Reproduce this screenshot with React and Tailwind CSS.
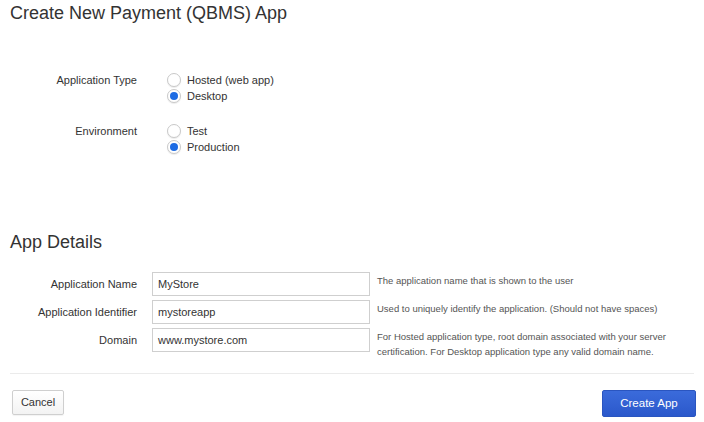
import React from "react";

function Radio({ checked, label }) {
  return (
    <div className="flex items-center h-[16px]">
      <span className="w-[14px] h-[14px] rounded-full bg-white border border-[#c9c9c9] shadow-[0_1px_1px_rgba(0,0,0,0.08)] flex items-center justify-center">
        {checked && <span className="w-[8px] h-[8px] rounded-full bg-[#1d6be3]" />}
      </span>
      <span className="ml-[6px] text-[11px] leading-[16px] text-[#333]">{label}</span>
    </div>
  );
}

function RadioGroup({ label, options }) {
  return (
    <div className="flex">
      <div className="w-[137px] text-right text-[11px] leading-[16px] text-[#333]">{label}</div>
      <div className="ml-[30px] flex flex-col">
        {options.map((o) => (
          <Radio key={o.label} checked={o.checked} label={o.label} />
        ))}
      </div>
    </div>
  );
}

function FieldRow({ label, value, help }) {
  return (
    <div className="flex items-start">
      <div className="w-[137px] text-right text-[11px] leading-[24px] text-[#333]">{label}</div>
      <div className="ml-[15px] w-[218px] h-[24px] border border-[#cfcfcf] bg-white flex items-center pl-[5px] text-[11px] text-[#333]">
        {value}
      </div>
      <div className="ml-[7px] w-[320px] pt-[1px] text-[9.5px] leading-[15px] text-[#555]">{help}</div>
    </div>
  );
}

export default function App() {
  return (
    <div className="w-[704px] h-[422px] bg-white overflow-hidden font-['Liberation_Sans',Arial,sans-serif] text-[#333]">
      <h1 className="pl-[10px] pt-[2px] text-[18px] leading-[22px] font-normal text-[#333]">
        Create New Payment (QBMS) App
      </h1>
      <div className="mt-[48px] flex flex-col gap-[19px]">
        <RadioGroup
          label="Application Type"
          options={[
            { label: "Hosted (web app)", checked: false },
            { label: "Desktop", checked: true },
          ]}
        />
        <RadioGroup
          label="Environment"
          options={[
            { label: "Test", checked: false },
            { label: "Production", checked: true },
          ]}
        />
      </div>
      <h2 className="mt-[76px] pl-[10px] text-[18px] leading-[22px] font-normal text-[#333]">App Details</h2>
      <div className="mt-[19px] flex flex-col gap-[4px]">
        <FieldRow label="Application Name" value="MyStore" help="The application name that is shown to the user" />
        <FieldRow
          label="Application Identifier"
          value="mystoreapp"
          help="Used to uniquely identify the application. (Should not have spaces)"
        />
        <FieldRow
          label="Domain"
          value="www.mystore.com"
          help="For Hosted application type, root domain associated with your server certification. For Desktop application type any valid domain name."
        />
      </div>
      <div className="mt-[14px] mx-[10px] border-t border-[#ebebeb]" />
      <div className="mt-[16px] flex justify-between items-start pl-[12px] pr-[8px]">
        <button className="w-[52px] h-[25px] border border-[#cfcfcf] rounded-[2px] bg-gradient-to-b from-white to-[#f3f3f3] text-[11px] text-[#333] shadow-[0_1px_1px_rgba(0,0,0,0.05)]">
          Cancel
        </button>
        <button className="w-[94px] h-[27px] border border-[#2a55c0] rounded-[2px] bg-gradient-to-b from-[#3b6bdb] to-[#2b58cb] text-[11.5px] text-white">
          Create App
        </button>
      </div>
    </div>
  );
}
